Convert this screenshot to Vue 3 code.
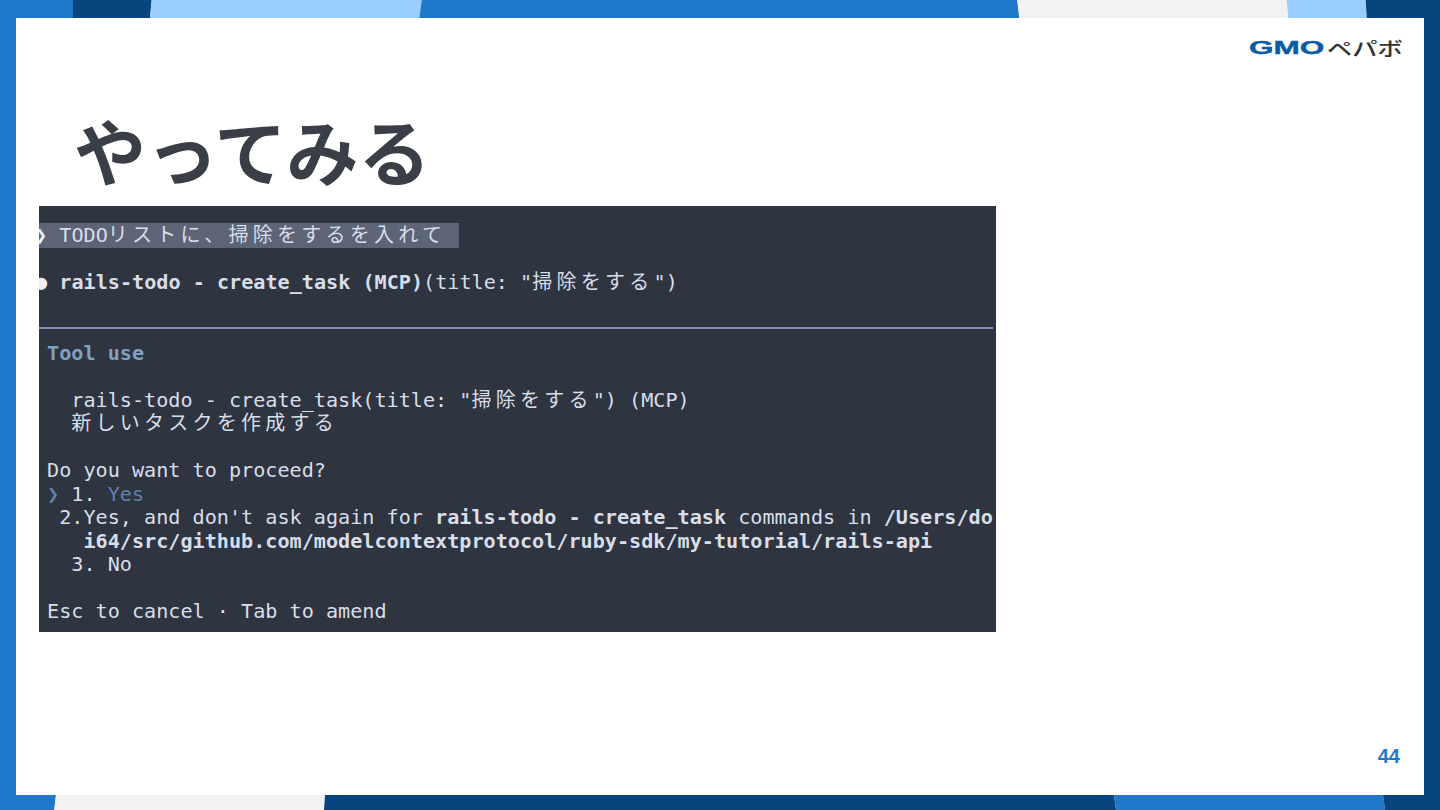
<script setup>
const topBar = [
  { fill: '#1f78c9', points: '0,0 73,0 73,18 0,18' },
  { fill: '#08457f', points: '73,0 151.7,0 150,18 73,18' },
  { fill: '#99ceff', points: '151.7,0 421.7,0 419.3,18 150,18' },
  { fill: '#1f78c9', points: '421.7,0 1017.3,0 1019.3,18 419.3,18' },
  { fill: '#f2f2f2', points: '1017.3,0 1286.7,0 1288.3,18 1019.3,18' },
  { fill: '#99ceff', points: '1286.7,0 1365.7,0 1366.7,18 1288.3,18' },
  { fill: '#08457f', points: '1365.7,0 1440,0 1440,18 1366.7,18' }
]
const bottomBar = [
  { fill: '#1f78c9', points: '0,0 56,0 54.3,15 0,15' },
  { fill: '#f2f2f2', points: '56,0 325,0 324,15 54.3,15' },
  { fill: '#08457f', points: '325,0 1114,0 1116,15 324,15' },
  { fill: '#1f78c9', points: '1114,0 1383,0 1385,15 1116,15' },
  { fill: '#08457f', points: '1383,0 1440,0 1440,15 1385,15' }
]
</script>

<template>
  <div class="slide">
    <svg class="bar" width="1440" height="18" viewBox="0 0 1440 18">
      <polygon v-for="s in topBar" :key="s.points" :fill="s.fill" :points="s.points" />
    </svg>
    <div class="middle">
      <main class="sheet">
        <header class="brand">
          <span class="brand-gmo">GMO</span>
          <span class="brand-kana">ペパボ</span>
        </header>
        <h1 class="title">やってみる</h1>
        <section class="terminal">
          <div class="line lead"><span class="selected"><span class="mark">❯</span> TODO<span class="cjk">リストに、掃除をするを入れて</span></span></div>
          <div class="line"></div>
          <div class="line lead"><span class="mark">●</span> <b>rails-todo - create_task (MCP)</b>(title: "<span class="cjk">掃除をする</span>")</div>
          <div class="line"></div>
          <div class="line rule"></div>
          <div class="line"><b class="heading">Tool use</b></div>
          <div class="line"></div>
          <div class="line i2">rails-todo - create_task(title: "<span class="cjk">掃除をする</span>") (MCP)</div>
          <div class="line i2"><span class="cjk">新しいタスクを作成する</span></div>
          <div class="line"></div>
          <div class="line">Do you want to proceed?</div>
          <div class="line"><span class="accent">❯</span> 1. <span class="accent">Yes</span></div>
          <div class="line i1">2.Yes, and don't ask again for <b>rails-todo - create_task</b> commands in <b>/Users/do</b></div>
          <div class="line i3"><b>i64/src/github.com/modelcontextprotocol/ruby-sdk/my-tutorial/rails-api</b></div>
          <div class="line i2">3. No</div>
          <div class="line"></div>
          <div class="line">Esc to cancel · Tab to amend</div>
        </section>
        <footer class="page-number">44</footer>
      </main>
    </div>
    <svg class="bar" width="1440" height="15" viewBox="0 0 1440 15">
      <polygon v-for="s in bottomBar" :key="s.points" :fill="s.fill" :points="s.points" />
    </svg>
  </div>
</template>

<style>
html, body { margin: 0; background: #fff; }
</style>

<style scoped>
.slide {
  width: 1440px;
  height: 810px;
  display: flex;
  flex-direction: column;
  overflow: hidden;
}
.bar { display: block; flex: none; }
.middle {
  flex: 1;
  min-height: 0;
  display: flex;
  border-left: 16px solid #1f78c9;
  border-right: 16px solid #08457f;
}
.sheet {
  flex: 1;
  min-width: 0;
  display: flex;
  flex-direction: column;
  background: #fff;
  padding: 0 24px 0 23px;
}
.brand {
  height: 58px;
  display: flex;
  justify-content: flex-end;
  align-items: center;
  gap: 3px;
  margin-right: -3px;
  white-space: nowrap;
}
.brand-gmo {
  font: 700 19px/1 "Liberation Sans", sans-serif;
  color: #0b5aa6;
  display: inline-block;
  width: 75px;
  -webkit-text-stroke: 0.4px #0b5aa6;
  transform: scaleX(1.66);
  transform-origin: left center;
}
.brand-kana {
  display: inline-block;
  font: 500 19px/1 "Noto Sans CJK JP", sans-serif;
  color: #333;
  width: 76px;
  transform: scaleX(1.33);
  transform-origin: left center;
}
.title {
  margin: 0 0 0 35px;
  height: 130px;
  padding-top: 16px;
  box-sizing: border-box;
  display: flex;
  align-items: center;
  font: 700 72px/1 "Noto Sans CJK JP", sans-serif;
  color: #3a3f47;
}
.terminal {
  flex: none;
  width: 957px;
  height: 426px;
  box-sizing: border-box;
  padding: 18px 0 0 8px;
  background: #2e3440;
  color: #d8dee9;
  font: 400 20.15px/23.5px "DejaVu Sans Mono", "Noto Sans CJK JP", monospace;
  overflow: hidden;
}
.line {
  height: 23.5px;
  white-space: pre;
}
.line b { font-weight: 700; }
.i1 { padding-left: 12.13px; }
.i2 { padding-left: 24.26px; }
.i3 { padding-left: 36.39px; }
.lead { margin-left: -12px; }
.selected {
  display: inline-block;
  width: 424px;
  height: 23.5px;
  background: #5d6475;
  box-shadow: 0 -1px 0 #5d6475;
}
.mark { color: #eceff4; }
.cjk {
  font-family: "Noto Sans CJK JP", sans-serif;
  font-size: 20px;
  line-height: 0;
  letter-spacing: 4.26px;
}
.rule { margin-left: -8px; margin-right: 3px; }
.rule::before {
  content: "";
  display: block;
  height: 2px;
  background: #7f90b0;
  transform: translateY(9px);
}
.heading { color: #81a1c1; }
.accent { color: #5e81ac; }
.page-number {
  margin-top: auto;
  padding-bottom: 27px;
  text-align: right;
  font: 700 20px/23px "Liberation Sans", sans-serif;
  color: #1f78c9;
}
</style>
